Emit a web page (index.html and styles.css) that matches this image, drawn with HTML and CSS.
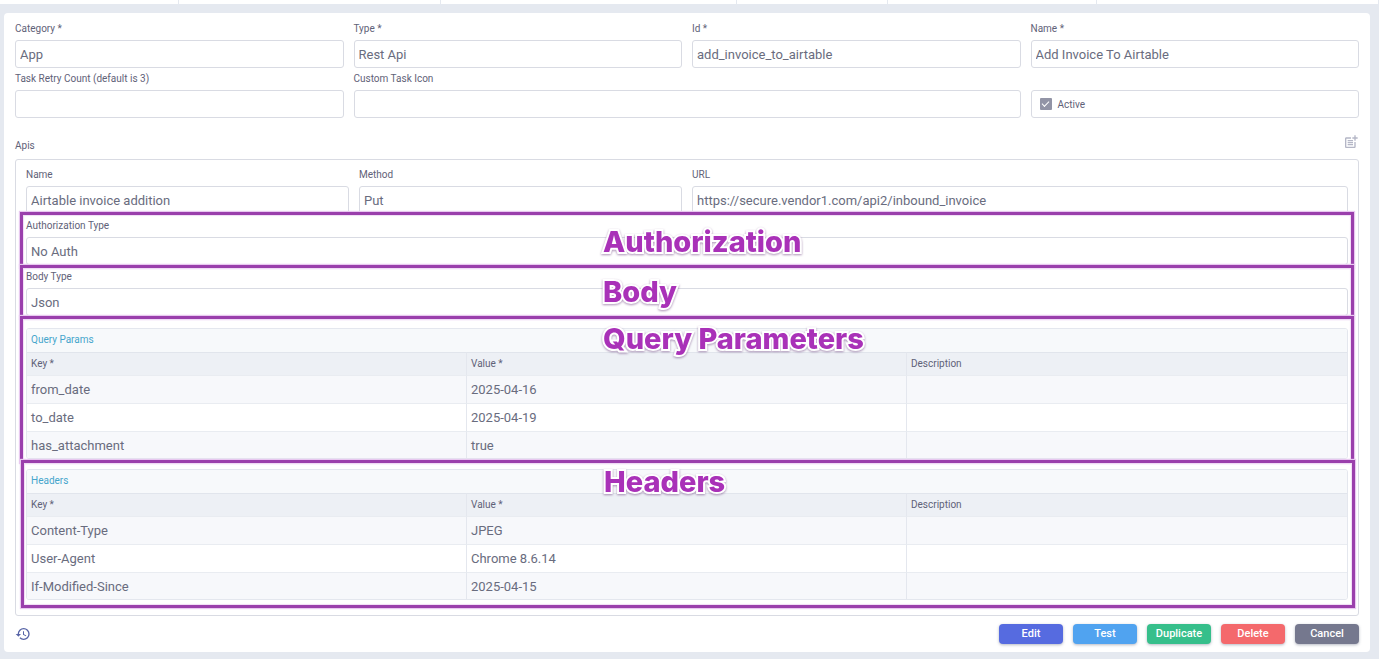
FILE: index.html
```html
<!DOCTYPE html>
<html lang="en">
  <head>
    <meta charset="UTF-8" />
    <meta name="viewport" content="width=device-width, initial-scale=1.0" />
    <title>Add Invoice To Airtable</title>
    <link rel="stylesheet" href="styles.css">
  </head>
  <body>
    <div class="grid-strip">
      <span></span><span></span><span></span><span></span><span></span><span></span>
    </div>

    <form class="card">
      <div class="form-grid">
        <div class="field">
          <label for="category">Category *</label>
          <input type="text" id="category" value="App">
        </div>
        <div class="field">
          <label for="type">Type *</label>
          <input type="text" id="type" value="Rest Api">
        </div>
        <div class="field">
          <label for="taskId">Id *</label>
          <input type="text" id="taskId" value="add_invoice_to_airtable">
        </div>
        <div class="field">
          <label for="taskName">Name *</label>
          <input type="text" id="taskName" value="Add Invoice To Airtable">
        </div>
        <div class="field">
          <label for="retry">Task Retry Count (default is 3)</label>
          <input type="text" id="retry">
        </div>
        <div class="field span-2">
          <label for="icon">Custom Task Icon</label>
          <input type="text" id="icon">
        </div>
        <label class="check-box">
          <input type="checkbox" checked>
          <span>Active</span>
        </label>
      </div>

      <div class="apis-head">
        <span>Apis</span>
        <button type="button" class="icon-btn" aria-label="Add api">
          <svg width="16" height="16" viewBox="0 0 24 24" fill="#b4b6c6">
            <path d="M17 19H5V7h7V5H5c-1.100 0-2 .9-2 2v12c0 1.100.9 2 2 2h12c1.100 0 2-.9 2-2v-7h-2v7z" />
            <path d="M19 2h-2v3h-3v2h3v3h2V7h3V5h-3V2zM7 9h8v2H7zM7 12v2h8v-2H7zM7 15h8v2H7z" />
          </svg>
        </button>
      </div>

      <div class="apis">
        <div class="form-grid">
          <div class="field">
            <label for="apiName">Name</label>
            <input type="text" id="apiName" value="Airtable invoice addition">
          </div>
          <div class="field">
            <label for="method">Method</label>
            <input type="text" id="method" value="Put">
          </div>
          <div class="field span-2">
            <label for="url">URL</label>
            <input type="text" id="url" value="https://secure.vendor1.com/api2/inbound_invoice">
          </div>
        </div>

        <div class="group auth">
          <div class="field">
            <label for="auth">Authorization Type</label>
            <input type="text" id="auth" value="No Auth">
          </div>
          <div class="mark"><strong>Authorization</strong></div>
        </div>

        <div class="group body-type">
          <div class="field">
            <label for="bodyType">Body Type</label>
            <input type="text" id="bodyType" value="Json">
          </div>
          <div class="mark"><strong>Body</strong></div>
        </div>

        <div class="group query">
          <div class="table-box">
            <div class="table-title">Query Params</div>
            <table>
              <thead>
                <tr><th>Key *</th><th>Value *</th><th>Description</th></tr>
              </thead>
              <tbody>
                <tr><td>from_date</td><td>2025-04-16</td><td></td></tr>
                <tr><td>to_date</td><td>2025-04-19</td><td></td></tr>
                <tr><td>has_attachment</td><td>true</td><td></td></tr>
              </tbody>
            </table>
          </div>
          <div class="mark"><strong>Query Parameters</strong></div>
        </div>

        <div class="group headers">
          <div class="table-box">
            <div class="table-title">Headers</div>
            <table>
              <thead>
                <tr><th>Key *</th><th>Value *</th><th>Description</th></tr>
              </thead>
              <tbody>
                <tr><td>Content-Type</td><td>JPEG</td><td></td></tr>
                <tr><td>User-Agent</td><td>Chrome 8.6.14</td><td></td></tr>
                <tr><td>If-Modified-Since</td><td>2025-04-15</td><td></td></tr>
              </tbody>
            </table>
          </div>
          <div class="mark"><strong>Headers</strong></div>
        </div>
      </div>

      <div class="footer">
        <button type="button" class="icon-btn" aria-label="History">
          <svg width="16" height="16" viewBox="0 0 24 24" fill="#5663a6">
            <path d="M13 3a9 9 0 0 0-9 9H1l3.890 3.890.07.14L9 12H6a7 7 0 1 1 7 7c-1.930 0-3.680-.79-4.940-2.060l-1.420 1.420A8.950 8.950 0 0 0 13 21a9 9 0 0 0 0-18zm-1 5v5l4.280 2.540.72-1.210-3.500-2.080V8H12z" />
          </svg>
        </button>
        <div class="actions">
          <button type="button" class="btn edit">Edit</button>
          <button type="button" class="btn test">Test</button>
          <button type="button" class="btn duplicate">Duplicate</button>
          <button type="button" class="btn delete">Delete</button>
          <button type="button" class="btn cancel">Cancel</button>
        </div>
      </div>
    </form>
  </body>
</html>
```
FILE: styles.css
```css
* {
  box-sizing: border-box;
}
body {
  margin: 0;
  min-height: 100vh;
  background: #e5e9f0;
  font-family: Roboto, "Liberation Sans", sans-serif;
  font-size: 10px;
  color: #5f6278;
}
.grid-strip {
  display: grid;
  grid-template-columns: 179fr 262fr 296fr 151fr 209fr 282fr;
  height: 4px;
  background: #fff;
}
.grid-strip span {
  border-right: 1px solid #e5e9f0;
}
.card {
  margin: 9px 9px 0 4px;
  padding: 5px 11px 8px;
  background: #fff;
  border-radius: 4px;
}
.form-grid {
  display: grid;
  grid-template-columns: repeat(4, 1fr);
  column-gap: 10px;
}
.span-2 {
  grid-column: span 2;
}
.field {
  display: flex;
  flex-direction: column;
}
.field label {
  line-height: 22px;
}
.field input,
.check-box {
  width: 100%;
  height: 28px;
  border: 1px solid #d9dbe3;
  border-radius: 3px;
  background: #fff;
}
.field input {
  padding: 0 4px;
  font-family: inherit;
  font-size: 13px;
  color: #696c7e;
}
.check-box {
  display: flex;
  align-items: center;
  align-self: end;
  gap: 6px;
  padding: 0 8px;
}
.check-box input {
  appearance: none;
  width: 12px;
  height: 12px;
  margin: 0;
  border-radius: 1px;
  background: #9294a6;
  display: grid;
  place-items: center;
}
.check-box input:checked::before {
  content: "";
  width: 6px;
  height: 3px;
  border: solid #fff;
  border-width: 0 0 1px 1px;
  transform: translateY(-1px) rotate(-45deg);
}
.apis-head {
  display: flex;
  justify-content: space-between;
  height: 41px;
  padding-top: 16px;
  line-height: 24px;
}
.icon-btn {
  width: 16px;
  height: 16px;
  padding: 0;
  border: 0;
  background: none;
}
.icon-btn svg {
  display: block;
}

/* api details */
.apis {
  padding: 4px 10px 15px;
  border: 1px solid #d9dbe3;
  border-radius: 3px;
}
.group {
  position: relative;
  margin-top: 1px;
}
.query {
  margin-top: 12px;
}
.headers {
  margin-top: 10px;
}
.table-box {
  border: 1px solid #e4e7ee;
  border-radius: 3px;
  overflow: hidden;
}
.table-title {
  height: 23px;
  padding: 0 4px;
  line-height: 22px;
  background: #f7f9fb;
  color: #45a5cc;
}
table {
  width: 100%;
  table-layout: fixed;
  border-collapse: separate;
  border-spacing: 0;
}
th,
td {
  padding: 0 4px;
  text-align: left;
  border-right: 1px solid #e4e7ee;
}
th:last-child,
td:last-child {
  border-right: 0;
}
th {
  height: 23px;
  padding-bottom: 2px;
  background: #edf0f5;
  border-top: 1px solid #e1e5ec;
  font-weight: 400;
}
td {
  height: 28px;
  border-top: 1px solid #e9ecf1;
  font-size: 13px;
  color: #696c7e;
}
tr:last-child td {
  height: 27px;
}
tbody tr:nth-child(odd) {
  background: #f7f8fb;
}

/* highlighted regions */
.mark {
  position: absolute;
  inset: -3px -6px -3px -6px;
  padding-left: 580px;
  border: 3px solid #9a3fac;
  box-shadow: 0 0 1px 1px #e8c8f0, inset 0 0 1px 1px #f0dcf5;
  pointer-events: none;
  z-index: 1;
}
.body-type .mark {
  top: -1px;
}
.query .mark {
  inset: -12px -6px -4px -6px;
}
.headers .mark {
  inset: -9px -7px -8px -5px;
}
.mark strong {
  display: block;
  font: 800 29px/34px Inter, sans-serif;
  color: #a931b8;
  white-space: nowrap;
  -webkit-text-stroke: 4px #fff;
  paint-order: stroke fill;
  filter: drop-shadow(0 1px 1px rgba(90, 40, 110, 0.5));
}
.auth strong {
  padding-top: 10px;
}
.body-type strong {
  padding-top: 7px;
}
.query strong {
  padding-top: 3px;
}
.headers strong {
  padding-top: 2px;
}

.footer {
  display: flex;
  justify-content: space-between;
  align-items: center;
  padding-top: 8px;
}
.actions {
  display: flex;
  gap: 10px;
}
.btn {
  width: 64px;
  height: 20px;
  padding: 0 0 1px;
  border: 0;
  border-radius: 4px;
  box-shadow: 0 1px 3px rgba(40, 50, 80, 0.35);
  font-family: inherit;
  font-size: 11px;
  font-weight: 500;
  color: #fff;
}
.edit {
  background: #566be0;
}
.test {
  background: #50a3f0;
}
.duplicate {
  background: #36bf8b;
}
.delete {
  background: #f4696c;
}
.cancel {
  background: #75788e;
}
```
